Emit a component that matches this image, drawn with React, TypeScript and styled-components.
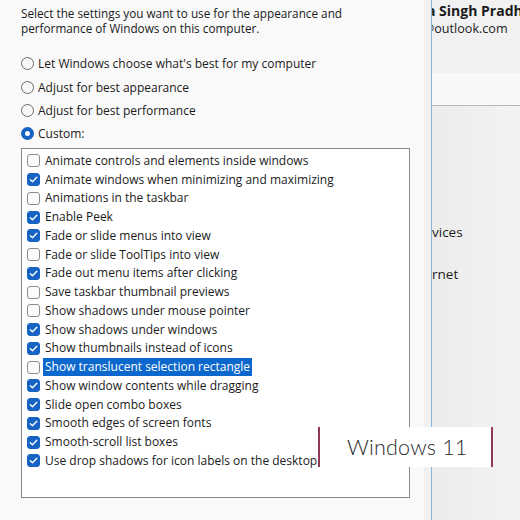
import React from "react";
import styled, { createGlobalStyle } from "styled-components";

const Global = createGlobalStyle`
  html, body { margin: 0; padding: 0; background: #f9f9f9; }
  * { box-sizing: border-box; }
`;

const Screen = styled.div`
  position: relative;
  width: 520px;
  height: 520px;
  display: flex;
  overflow: hidden;
  font-family: "Open Sans", "Noto Sans", sans-serif;
  color: #1b1b1b;
`;

const Dialog = styled.div`
  width: 424px;
  flex: none;
  background: #f9f9f9;
  padding: 6px 0 0 21px;
  display: flex;
  flex-direction: column;
`;

const Description = styled.p`
  margin: 0;
  font-size: 11.75px;
  line-height: 15px;
`;

const RadioGroup = styled.div`
  margin-top: 16px;
  display: flex;
  flex-direction: column;
`;

const RadioRow = styled.label`
  height: 23.4px;
  display: flex;
  align-items: center;
  gap: 4px;
  font-size: 12px;
`;

const RadioDot = styled.span<{ $on?: boolean }>`
  width: 13px;
  height: 13px;
  border-radius: 50%;
  flex: none;
  background: ${(p) => (p.$on ? "#fff" : "#f7f7f7")};
  border: ${(p) => (p.$on ? "4px solid #1763c4" : "1px solid #6c6c6c")};
`;

const ListBox = styled.div`
  margin-top: 2px;
  width: 389px;
  height: 350px;
  border: 1px solid #8a8a8a;
  background: #ffffff;
  padding: 3px 0 0 5px;
  display: flex;
  flex-direction: column;
`;

const Item = styled.div`
  height: 18.75px;
  display: flex;
  align-items: center;
  font-size: 12px;
`;

const Box = styled.span<{ $on?: boolean }>`
  width: 13px;
  height: 13px;
  flex: none;
  border-radius: 3px;
  margin-right: 3px;
  display: flex;
  align-items: center;
  justify-content: center;
  background: ${(p) => (p.$on ? "#1763c4" : "#fbfbfb")};
  border: 1px solid ${(p) => (p.$on ? "#1763c4" : "#8d8d8d")};
`;

const ItemText = styled.span<{ $sel?: boolean }>`
  padding: 0 2px;
  line-height: 18px;
  background: ${(p) => (p.$sel ? "#0c68cc" : "transparent")};
  color: ${(p) => (p.$sel ? "#ffffff" : "#1b1b1b")};
`;

const Edge = styled.div`
  width: 8px;
  flex: none;
  background: #f1f1f1;
  border-right: 1px solid #8db5d9;
`;

const BackWindow = styled.div`
  flex: 1;
  overflow: hidden;
  display: flex;
  flex-direction: column;
  background: linear-gradient(90deg, #ececec 0%, #f3f3f3 100%);
  white-space: nowrap;
`;

const Header = styled.div`
  height: 73px;
  background: #f1f1f1;
  padding-top: 2px;
`;

const Name = styled.div`
  font-size: 14px;
  font-weight: 700;
  line-height: 18px;
  margin-left: -5px;
  color: #1b1b1b;
`;

const Mail = styled.div`
  font-size: 12.6px;
  line-height: 17px;
  margin-left: -9px;
  color: #1b1b1b;
`;

const Band = styled.div`
  height: 33px;
  background: #f8f8f8;
  border-bottom: 1px solid #b9b9b9;
`;

const MenuText = styled.div<{ $top: number }>`
  margin-top: ${(p) => p.$top}px;
  font-size: 13.5px;
  line-height: 18px;
  color: #1b1b1b;
`;

const Badge = styled.div`
  position: absolute;
  left: 318px;
  top: 427px;
  width: 175px;
  height: 40px;
  background: #ffffff;
  border-left: 2px solid #8e3a52;
  border-right: 2px solid #8e3a52;
  display: flex;
  align-items: center;
  padding-left: 27px;
  font-family: "Lato", "Inter", sans-serif;
  font-weight: 300;
  font-size: 21.5px;
  letter-spacing: 0.2px;
  color: #2a2a2a;
`;

const Check = () => (
  <svg width="9" height="9" viewBox="0 0 9 9">
    <path d="M1.3 4.7 L3.5 6.8 L7.8 2.2" fill="none" stroke="#fff" strokeWidth="1.3" strokeLinecap="round" strokeLinejoin="round" />
  </svg>
);

const items: [string, boolean][] = [
  ["Animate controls and elements inside windows", false],
  ["Animate windows when minimizing and maximizing", true],
  ["Animations in the taskbar", false],
  ["Enable Peek", true],
  ["Fade or slide menus into view", true],
  ["Fade or slide ToolTips into view", false],
  ["Fade out menu items after clicking", true],
  ["Save taskbar thumbnail previews", false],
  ["Show shadows under mouse pointer", false],
  ["Show shadows under windows", true],
  ["Show thumbnails instead of icons", true],
  ["Show translucent selection rectangle", false],
  ["Show window contents while dragging", true],
  ["Slide open combo boxes", true],
  ["Smooth edges of screen fonts", true],
  ["Smooth-scroll list boxes", true],
  ["Use drop shadows for icon labels on the desktop", true],
];

const radios: [string, boolean][] = [
  ["Let Windows choose what's best for my computer", false],
  ["Adjust for best appearance", false],
  ["Adjust for best performance", false],
  ["Custom:", true],
];

export default function App() {
  return (
    <>
      <Global />
      <Screen>
        <Dialog>
          <Description>
            Select the settings you want to use for the appearance and
            <br />
            performance of Windows on this computer.
          </Description>
          <RadioGroup>
            {radios.map(([t, on]) => (
              <RadioRow key={t}>
                <RadioDot $on={on} />
                {t}
              </RadioRow>
            ))}
          </RadioGroup>
          <ListBox>
            {items.map(([t, on], i) => (
              <Item key={t}>
                <Box $on={on}>{on && <Check />}</Box>
                <ItemText $sel={i === 11}>{t}</ItemText>
              </Item>
            ))}
          </ListBox>
        </Dialog>
        <Edge />
        <BackWindow>
          <Header>
            <Name>a Singh Pradhan</Name>
            <Mail>@outlook.com</Mail>
          </Header>
          <Band />
          <MenuText $top={117}>vices</MenuText>
          <MenuText $top={24}>rnet</MenuText>
        </BackWindow>
        <Badge>Windows 11</Badge>
      </Screen>
    </>
  );
}
